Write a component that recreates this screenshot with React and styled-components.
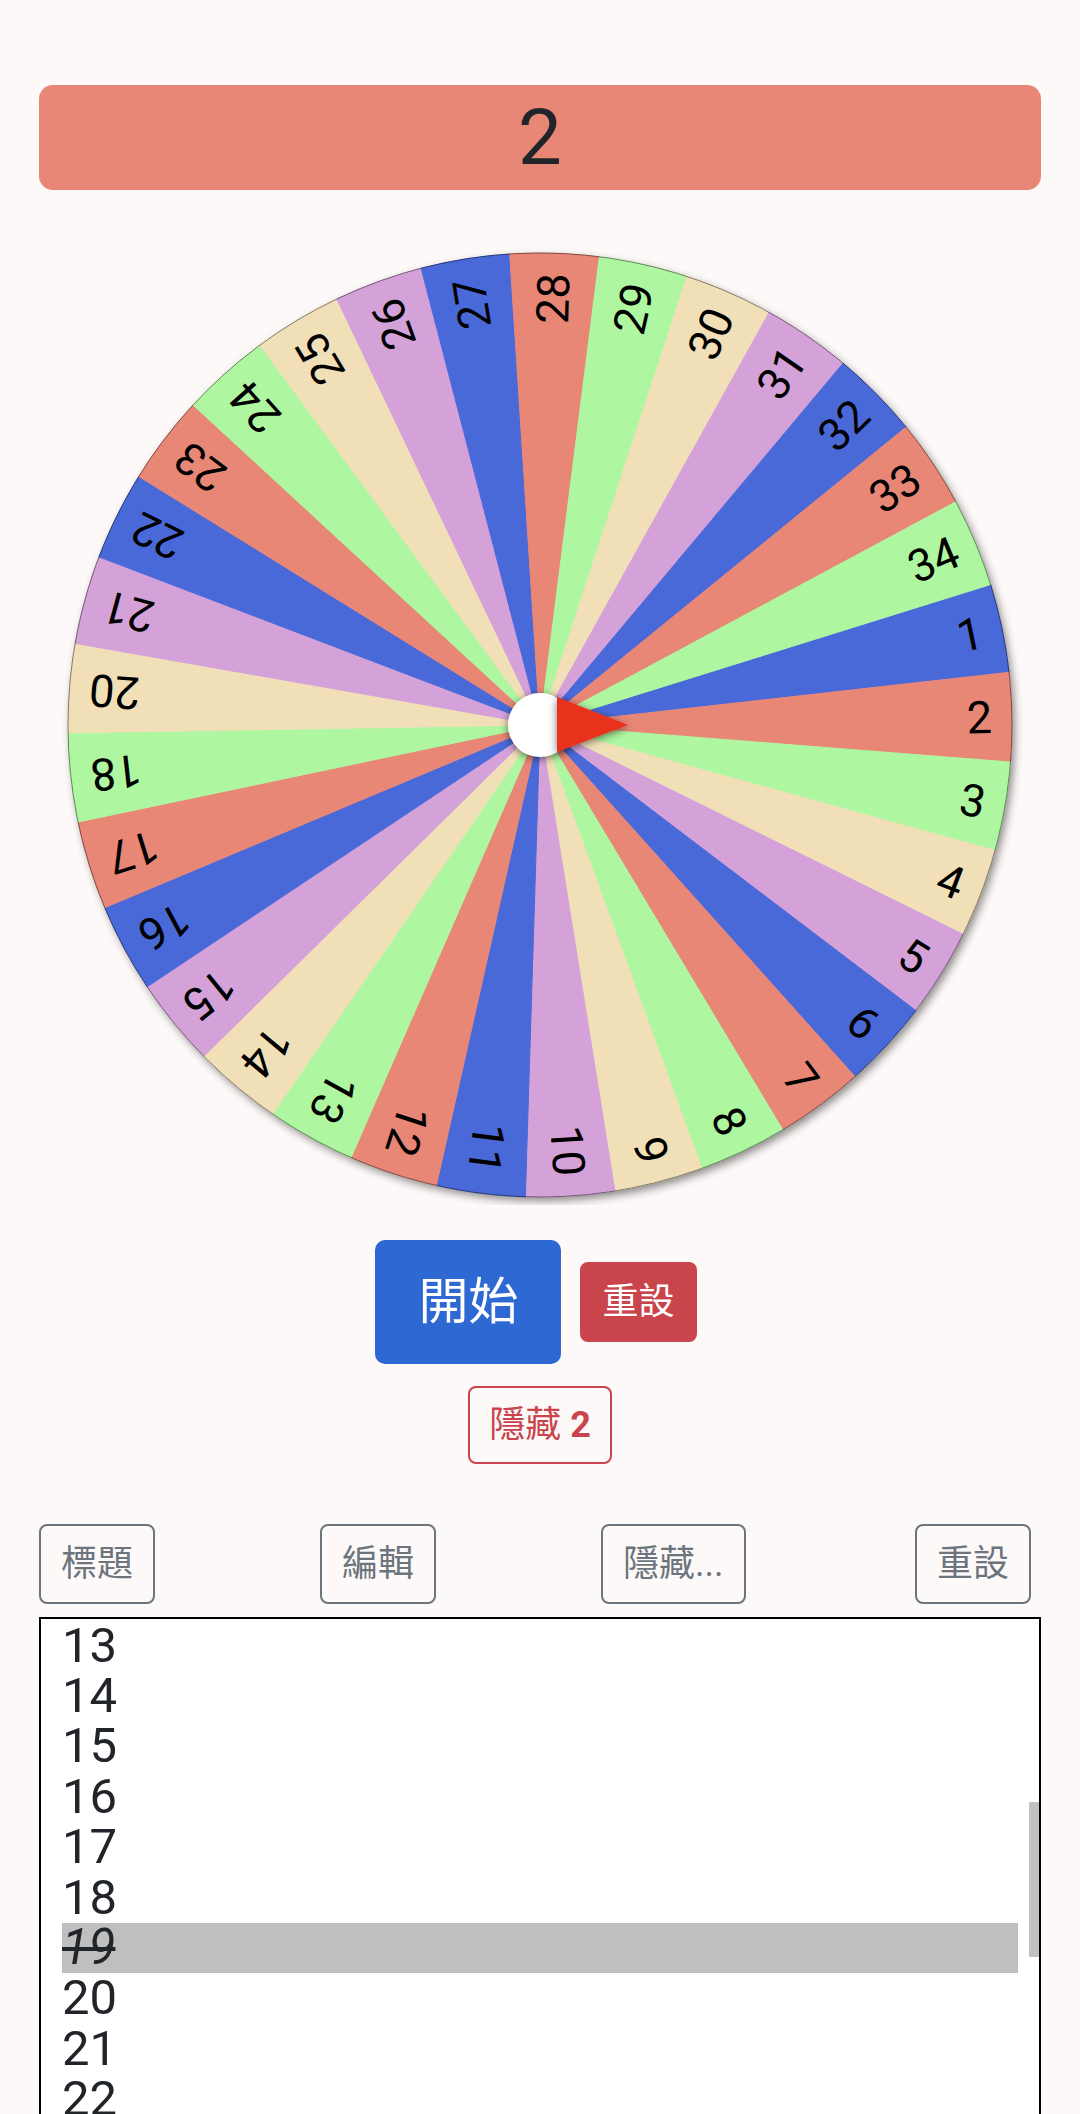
import React, { useLayoutEffect, useRef } from "react";
import styled, { createGlobalStyle } from "styled-components";

const GlobalStyle = createGlobalStyle`
  html, body { margin: 0; padding: 0; background: #fdf9f8; }
  body {
    font-family: Roboto, "Noto Sans CJK TC", sans-serif;
    color: #212529;
  }
  * { box-sizing: border-box; }
`;

const Page = styled.div`
  display: flex;
  flex-direction: column;
  padding: 85px 39px 0;
`;

const ResultBar = styled.div`
  height: 105px;
  background: #e98777;
  border-radius: 14px;
  display: flex;
  align-items: center;
  justify-content: center;
  font-size: 78px;
  line-height: 1;
  color: #212529;
`;

const WheelArea = styled.div`
  margin-top: 55px;
  display: flex;
  justify-content: center;
`;

const WheelSvg = styled.svg`
  display: block;
  width: 1002px;
  height: 960px;
`;

const ButtonRow = styled.div`
  margin-top: 35px;
  display: flex;
  justify-content: center;
  align-items: center;
  gap: 19px;
  padding-right: 8px;
`;

const BaseButton = styled.button`
  font-family: Roboto, "Noto Sans CJK TC", sans-serif;
  display: inline-flex;
  align-items: center;
  justify-content: center;
  cursor: pointer;
  line-height: 1;
  white-space: nowrap;
`;

const StartButton = styled(BaseButton)`
  height: 124px;
  padding: 0 41px;
  font-size: 50px;
  color: #fff;
  background: #2d68d3;
  border: 2px solid #2d68d3;
  border-radius: 10px;
`;

const SolidDanger = styled(BaseButton)`
  height: 80px;
  padding: 0 20px;
  font-size: 36px;
  color: #fff;
  background: #c9444b;
  border: 2px solid #c9444b;
  border-radius: 8px;
`;

const HideButton = styled(BaseButton)`
  align-self: center;
  margin-top: 22px;
  height: 78px;
  padding: 0 19px;
  font-size: 36px;
  color: #c9444b;
  background: transparent;
  border: 2px solid #c9444b;
  border-radius: 8px;
  b { margin-left: 9px; font-weight: 700; }
`;

const Toolbar = styled.div`
  margin-top: 60px;
  display: flex;
  gap: 165px;
  padding-right: 10px;
`;

const ToolButton = styled(BaseButton)`
  height: 80px;
  padding: 0 20px;
  font-size: 36px;
  color: #6c757d;
  background: transparent;
  border: 2px solid #6c757d;
  border-radius: 8px;
  margin-left: ${(p) => (p.$pushRight ? "auto" : "0")};
`;

const ListFrame = styled.div`
  position: relative;
  margin-top: 13px;
  height: 515px;
  border: 2px solid #000;
  background: #fff;
`;

const ListScroller = styled.div`
  height: 100%;
  overflow-y: scroll;
  padding: 2px 21px;
  scrollbar-width: none;
  &::-webkit-scrollbar { display: none; }
`;

const ListRow = styled.div`
  height: 50.4px;
  line-height: 50.4px;
  font-size: 49px;
  color: #212529;
  background: ${(p) => (p.$selected ? "#bfbfbf" : "transparent")};
  font-style: ${(p) => (p.$hidden ? "italic" : "normal")};
  text-decoration: ${(p) => (p.$hidden ? "line-through" : "none")};
`;

const ScrollThumb = styled.div`
  position: absolute;
  right: 0;
  top: 183px;
  width: 10px;
  height: 155px;
  background: #c1c1c1;
`;

const COLORS = ["#4a69d9", "#e98777", "#aef7a0", "#f1dfb8", "#d4a2d9"];
const ALL = Array.from({ length: 34 }, (_, i) => i + 1);
const HIDDEN = [19];
const VISIBLE = ALL.filter((n) => !HIDDEN.includes(n));
const R = 472;
const STEP = 360 / VISIBLE.length;
const OFFSET = -0.95;

const rad = (d) => (d * Math.PI) / 180;

function Wheel() {
  return (
    <WheelSvg viewBox="-501 -480 1002 960">
      <defs>
        <filter id="wheelShadow" x="-10%" y="-10%" width="120%" height="120%">
          <feDropShadow dx="3" dy="4" stdDeviation="4" floodColor="#000" floodOpacity="0.45" />
        </filter>
        <filter id="pinShadow" x="-50%" y="-50%" width="200%" height="200%">
          <feDropShadow dx="0" dy="2" stdDeviation="4" floodColor="#000" floodOpacity="0.55" />
        </filter>
      </defs>
      <circle cx="0" cy="0" r={R} fill="#fff" filter="url(#wheelShadow)" />
      {VISIBLE.map((n, k) => {
        const c = OFFSET + (k - 1) * STEP;
        const a0 = rad(c - STEP / 2);
        const a1 = rad(c + STEP / 2);
        const color = COLORS[k % COLORS.length];
        const d = `M0 0 L${R * Math.cos(a0)} ${R * Math.sin(a0)} A${R} ${R} 0 0 1 ${R * Math.cos(a1)} ${R * Math.sin(a1)} Z`;
        return <path key={`s${n}`} d={d} fill={color} stroke={color} strokeWidth="1" />;
      })}
      <circle cx="0" cy="0" r={R} fill="none" stroke="rgba(0,0,0,0.45)" strokeWidth="1" />
      {VISIBLE.map((n, k) => {
        const c = OFFSET + (k - 1) * STEP;
        return (
          <text
            key={`t${n}`}
            transform={`rotate(${c})`}
            x="452"
            y="0"
            textAnchor="end"
            dominantBaseline="central"
            fontFamily="Roboto, 'Liberation Sans', sans-serif"
            fontSize="45"
            fill="#000"
          >
            {n}
          </text>
        );
      })}
      <circle cx="0" cy="0" r="32" fill="#fff" filter="url(#pinShadow)" />
      <polygon points="17,-28 17,27 88,0" fill="#e8321f" filter="url(#pinShadow)" />
    </WheelSvg>
  );
}

function NameList() {
  const ref = useRef(null);
  useLayoutEffect(() => {
    if (ref.current) ref.current.scrollTop = 605;
  }, []);
  return (
    <ListFrame>
      <ListScroller ref={ref}>
        {ALL.map((n) => (
          <ListRow key={n} $selected={n === 19} $hidden={HIDDEN.includes(n)}>
            {n}
          </ListRow>
        ))}
      </ListScroller>
      <ScrollThumb />
    </ListFrame>
  );
}

export default function App() {
  return (
    <>
      <GlobalStyle />
      <Page>
        <ResultBar>2</ResultBar>
        <WheelArea>
          <Wheel />
        </WheelArea>
        <ButtonRow>
          <StartButton>開始</StartButton>
          <SolidDanger>重設</SolidDanger>
        </ButtonRow>
        <HideButton>
          隱藏<b>2</b>
        </HideButton>
        <Toolbar>
          <ToolButton>標題</ToolButton>
          <ToolButton>編輯</ToolButton>
          <ToolButton>隱藏...</ToolButton>
          <ToolButton $pushRight>重設</ToolButton>
        </Toolbar>
        <NameList />
      </Page>
    </>
  );
}
